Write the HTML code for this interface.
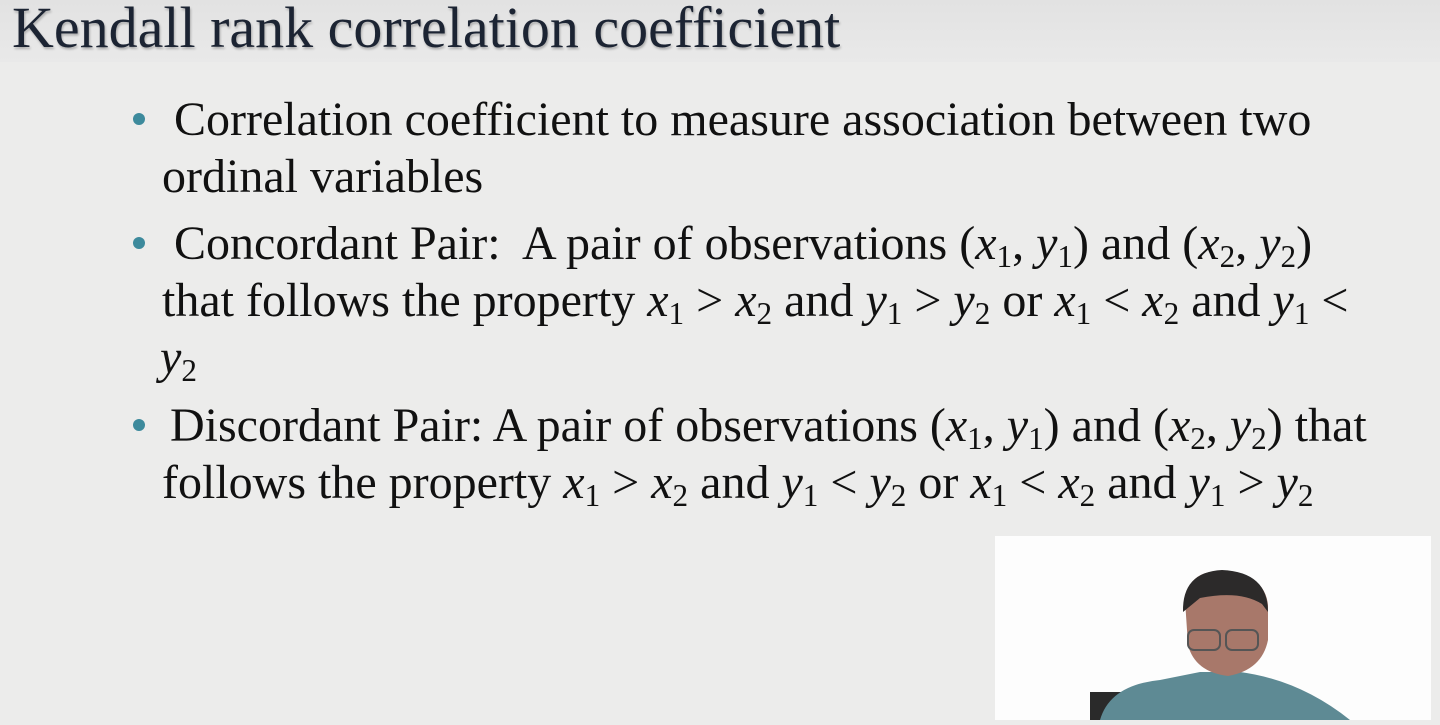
<!DOCTYPE html>
<html><head><meta charset="utf-8"><style>
html,body{margin:0;padding:0}
body{width:1440px;height:720px;overflow:hidden;background:#ececeb;position:relative;font-family:"Liberation Serif",serif;color:#111}
.hdr{position:absolute;left:0;top:0;width:1440px;height:62px;background:linear-gradient(#e2e2e2,#e9e9e9)}
.title{position:absolute;left:12px;top:-6px;font-size:58px;color:#1c2433;white-space:nowrap;text-shadow:1px 2px 2px rgba(0,0,0,.25)}
.l{position:absolute;font-size:48px;white-space:nowrap;line-height:1}
.b{position:absolute;width:12px;height:12px;border-radius:50%;background:#3d8a9c}
i{font-style:italic}
sub{font-size:0.65em;vertical-align:-0.25em;line-height:0}
.cam{position:absolute;left:995px;top:536px;width:436px;height:184px;background:#fdfdfd}
</style></head><body>
<div class="hdr"></div>
<div class="title">Kendall rank correlation coefficient</div>
<div class="b" style="left:133px;top:113px"></div>
<div class="l" style="left:174px;top:96px">Correlation coefficient to measure association between two</div>
<div class="l" style="left:162px;top:153px">ordinal variables</div>
<div class="b" style="left:133px;top:237px"></div>
<div class="l" style="left:174px;top:220px">Concordant Pair:&nbsp; A pair of observations (<i>x</i><sub>1</sub>, <i>y</i><sub>1</sub>) and (<i>x</i><sub>2</sub>, <i>y</i><sub>2</sub>)</div>
<div class="l" style="left:162px;top:277px">that follows the property <i>x</i><sub>1</sub> &gt; <i>x</i><sub>2</sub> and <i>y</i><sub>1</sub> &gt; <i>y</i><sub>2</sub> or <i>x</i><sub>1</sub> &lt; <i>x</i><sub>2</sub> and <i>y</i><sub>1</sub> &lt;</div>
<div class="l" style="left:160px;top:334px"><i>y</i><sub>2</sub></div>
<div class="b" style="left:133px;top:419px"></div>
<div class="l" style="left:170px;top:402px">Discordant Pair: A pair of observations (<i>x</i><sub>1</sub>, <i>y</i><sub>1</sub>) and (<i>x</i><sub>2</sub>, <i>y</i><sub>2</sub>) that</div>
<div class="l" style="left:162px;top:459px">follows the property <i>x</i><sub>1</sub> &gt; <i>x</i><sub>2</sub> and <i>y</i><sub>1</sub> &lt; <i>y</i><sub>2</sub> or <i>x</i><sub>1</sub> &lt; <i>x</i><sub>2</sub> and <i>y</i><sub>1</sub> &gt; <i>y</i><sub>2</sub></div>
<div class="cam">
<svg width="436" height="184" viewBox="995 536 436 184">
<rect x="1090" y="692" width="40" height="28" fill="#2a2a2a"/>
<path d="M1100 720 Q1110 685 1160 680 L1200 672 L1240 672 Q1300 680 1350 720 Z" fill="#5e8a94"/>
<path d="M1185 600 Q1190 568 1225 572 Q1265 575 1268 605 L1268 640 Q1262 670 1228 676 Q1195 672 1188 645 Z" fill="#a8786a"/>
<path d="M1183 612 Q1182 572 1222 570 Q1268 572 1268 612 L1262 604 Q1240 590 1200 598 Z" fill="#2c2a2a"/>
<rect x="1188" y="630" width="32" height="20" rx="6" fill="none" stroke="#555" stroke-width="2"/>
<rect x="1226" y="630" width="32" height="20" rx="6" fill="none" stroke="#555" stroke-width="2"/>
</svg>
</div>
</body></html>
